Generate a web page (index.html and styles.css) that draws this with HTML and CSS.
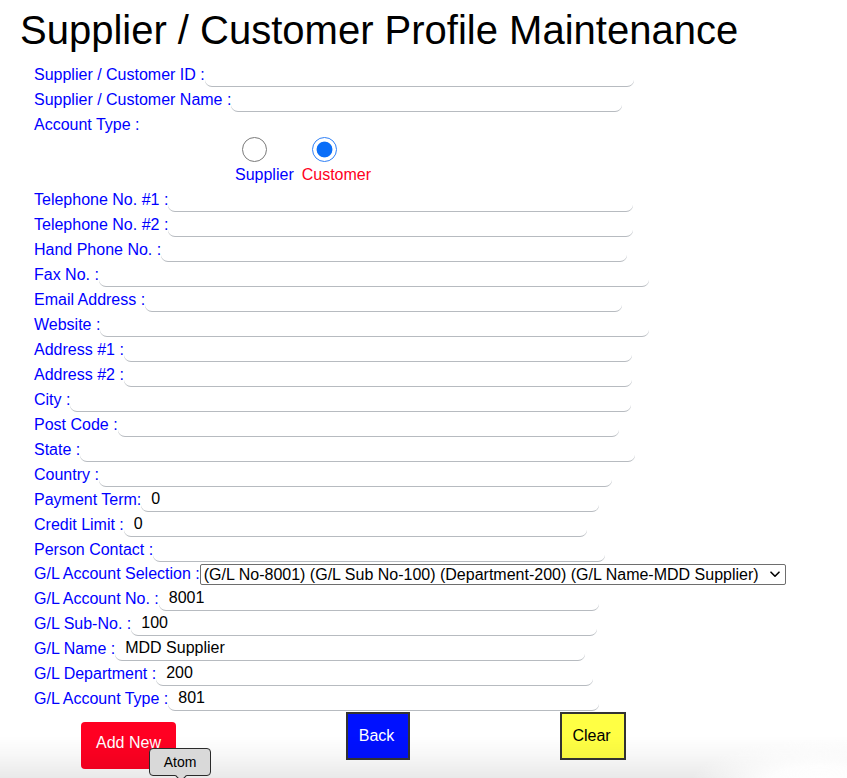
FILE: index.html
```html
<!DOCTYPE html>
<html lang="en">
<head>
<meta charset="utf-8">
<title>Supplier / Customer Profile Maintenance</title>
<link rel="stylesheet" href="styles.css">
</head>
<body>
<h1 class="title">Supplier / Customer Profile Maintenance</h1>
<form class="form">
  <div class="row"><label class="lbl">Supplier / Customer ID :</label><input class="field w-id" type="text"></div>
  <div class="row"><label class="lbl">Supplier / Customer Name :</label><input class="field w-name" type="text"></div>
  <div class="row"><span class="lbl">Account Type :</span></div>
  <div class="radios">
    <label class="radio-item radio-supplier"><input class="radio" type="radio" name="acct"><span class="radio-text">Supplier</span></label>
    <label class="radio-item radio-customer"><input class="radio" type="radio" name="acct" checked><span class="radio-text">Customer</span></label>
  </div>
  <div class="row"><label class="lbl">Telephone No. #1 :</label><input class="field w-tel1" type="text"></div>
  <div class="row"><label class="lbl">Telephone No. #2 :</label><input class="field w-tel2" type="text"></div>
  <div class="row"><label class="lbl">Hand Phone No. :</label><input class="field w-hand" type="text"></div>
  <div class="row"><label class="lbl">Fax No. :</label><input class="field w-fax" type="text"></div>
  <div class="row"><label class="lbl">Email Address :</label><input class="field w-email" type="text"></div>
  <div class="row"><label class="lbl">Website :</label><input class="field w-web" type="text"></div>
  <div class="row"><label class="lbl">Address #1 :</label><input class="field w-addr" type="text"></div>
  <div class="row"><label class="lbl">Address #2 :</label><input class="field w-addr" type="text"></div>
  <div class="row"><label class="lbl">City :</label><input class="field w-city" type="text"></div>
  <div class="row"><label class="lbl">Post Code :</label><input class="field w-post" type="text"></div>
  <div class="row"><label class="lbl">State :</label><input class="field w-state" type="text"></div>
  <div class="row"><label class="lbl">Country :</label><input class="field w-country" type="text"></div>
  <div class="row"><label class="lbl">Payment Term:</label><input class="field w-pay" type="text" value="0"></div>
  <div class="row"><label class="lbl">Credit Limit :</label><input class="field w-credit" type="text" value="0"></div>
  <div class="row"><label class="lbl">Person Contact :</label><input class="field w-person" type="text"></div>
  <div class="row row-select"><label class="lbl">G/L Account Selection :</label>
    <span class="sel-wrap">
      <select class="sel"><option>(G/L No-8001) (G/L Sub No-100) (Department-200) (G/L Name-MDD Supplier)</option></select>
      <svg class="sel-arrow" width="10" height="7" viewBox="0 0 10 7"><path d="M1 1.2 L5 5.2 L9 1.2" fill="none" stroke="#000" stroke-width="1.6" stroke-linecap="round" stroke-linejoin="round"/></svg>
    </span>
  </div>
  <div class="row"><label class="lbl">G/L Account No. :</label><input class="field w-glno" type="text" value="8001"></div>
  <div class="row"><label class="lbl">G/L Sub-No. :</label><input class="field w-glsub" type="text" value="100"></div>
  <div class="row"><label class="lbl">G/L Name :</label><input class="field w-glname" type="text" value="MDD Supplier"></div>
  <div class="row"><label class="lbl">G/L Department :</label><input class="field w-gldept" type="text" value="200"></div>
  <div class="row"><label class="lbl">G/L Account Type :</label><input class="field w-gltype" type="text" value="801"></div>
  <div class="actions">
    <button type="button" class="btn btn-add">Add New</button>
    <button type="button" class="btn btn-back">Back</button>
    <button type="button" class="btn btn-clear">Clear</button>
  </div>
</form>
<div class="tooltip">Atom</div>
<div class="shade"></div>
</body>
</html>
```
FILE: styles.css
```css
html, body {
  margin: 0;
  padding: 0;
  background: #ffffff;
}
body {
  font-family: "Liberation Sans", Arial, sans-serif;
  font-size: 16px;
  color: #000;
  overflow: hidden;
  height: 778px;
}
.title {
  margin: 0;
  padding: 7px 0 0 20px;
  font-size: 40px;
  font-weight: normal;
  line-height: 46px;
  color: #000;
}
.form {
  margin-top: 9px;
  padding-left: 34px;
}
.row {
  display: flex;
  align-items: center;
  height: 25px;
}
.row-select {
  height: 24px;
}
.lbl {
  color: #0000ff;
  white-space: nowrap;
  flex: none;
}
.field {
  flex: none;
  box-sizing: border-box;
  height: 25px;
  border: 0;
  border-bottom: 1px solid #b7bbc0;
  border-radius: 7px;
  padding: 0 9px 0 10px;
  background: transparent;
  font-family: "Liberation Sans", Arial, sans-serif;
  font-size: 16px;
  color: #000;
  outline: none;
}
.w-id { width: 429px; }
.w-name { width: 391px; }
.w-tel1, .w-tel2 { width: 465px; }
.w-hand { width: 466px; }
.w-fax { width: 550px; }
.w-email { width: 477px; }
.w-web { width: 549px; }
.w-addr { width: 508px; }
.w-city { width: 561px; }
.w-post { width: 501px; }
.w-state { width: 555px; }
.w-country { width: 513px; }
.w-pay { width: 458px; }
.w-credit { width: 463px; }
.w-person { width: 452px; }
.w-glno { width: 440px; }
.w-glsub { width: 466px; }
.w-glname { width: 470px; }
.w-gldept { width: 437px; }
.w-gltype { width: 431px; }

.radios {
  display: flex;
  gap: 8px;
  padding-left: 201px;
  height: 50px;
}
.radio-item {
  display: flex;
  flex-direction: column;
  align-items: flex-start;
}
.radio {
  appearance: none;
  -webkit-appearance: none;
  margin: 0;
  width: 25px;
  height: 25px;
  border-radius: 50%;
  border: 1.5px solid #7a7a7a;
  background: #fff;
  box-sizing: border-box;
}
.radio:checked {
  border-color: #2f80f6;
  background: radial-gradient(circle, #0a6ef8 0, #0a6ef8 7.5px, #ffffff 8.3px);
}
.radio-supplier .radio { margin-left: 7px; }
.radio-customer .radio { margin-left: 10px; }
.radio-text {
  line-height: 25px;
}
.radio-supplier .radio-text { color: #0000ff; }
.radio-customer .radio-text { color: #ff0022; }

.sel-wrap {
  position: relative;
  display: inline-block;
  flex: none;
}
.sel {
  appearance: none;
  -webkit-appearance: none;
  display: block;
  width: 586px;
  height: 21px;
  box-sizing: border-box;
  border: 1px solid #6e6e6e;
  border-radius: 2px;
  background: #fff;
  padding: 0 0 0 3px;
  font-family: "Liberation Sans", Arial, sans-serif;
  font-size: 16px;
  line-height: 19px;
  color: #000;
}
.sel-arrow {
  position: absolute;
  right: 6px;
  top: 7px;
}

.actions {
  display: flex;
  align-items: flex-start;
  padding-top: 1px;
}
.btn {
  box-sizing: border-box;
  font-family: "Liberation Sans", Arial, sans-serif;
  font-size: 16px;
  display: flex;
  align-items: center;
  justify-content: center;
  padding: 0;
  cursor: pointer;
}
.btn-add {
  margin-left: 47px;
  margin-top: 10px;
  width: 95px;
  height: 47px;
  background: #ff0022;
  color: #fff;
  border: 0;
  border-radius: 4px;
  padding-bottom: 6px;
}
.btn-back {
  margin-left: 170px;
  width: 64px;
  height: 48px;
  background: #0011ff;
  color: #fff;
  border: 2px solid #333333;
  border-radius: 0;
  padding-right: 3px;
}
.btn-clear {
  margin-left: 150px;
  width: 66px;
  height: 48px;
  background: #ffff44;
  color: #000;
  border: 2px solid #333333;
  border-radius: 0;
  padding-right: 3px;
}
.tooltip {
  position: absolute;
  left: 149px;
  top: 748px;
  width: 62px;
  height: 28px;
  box-sizing: border-box;
  background: #d9d9d9;
  border: 1px solid #2a2a2a;
  border-radius: 4px;
  font-size: 14px;
  line-height: 26px;
  text-align: center;
  color: #000;
  z-index: 3;
}
.tooltip::after {
  content: "";
  position: absolute;
  left: 27px;
  bottom: -5px;
  width: 7px;
  height: 7px;
  background: #d9d9d9;
  border-right: 1px solid #2a2a2a;
  border-bottom: 1px solid #2a2a2a;
  transform: rotate(45deg);
}
.shade {
  position: fixed;
  left: 0;
  right: 0;
  bottom: 0;
  height: 42px;
  pointer-events: none;
  z-index: 2;
  background:
    radial-gradient(ellipse 130px 45px at 820px 48px, rgba(255,255,255,1) 0%, rgba(255,255,255,0.9) 40%, rgba(255,255,255,0) 100%),
    linear-gradient(to bottom, rgba(0,0,0,0) 0%, rgba(0,0,0,0.03) 45%, rgba(0,0,0,0.085) 100%);
}
```
